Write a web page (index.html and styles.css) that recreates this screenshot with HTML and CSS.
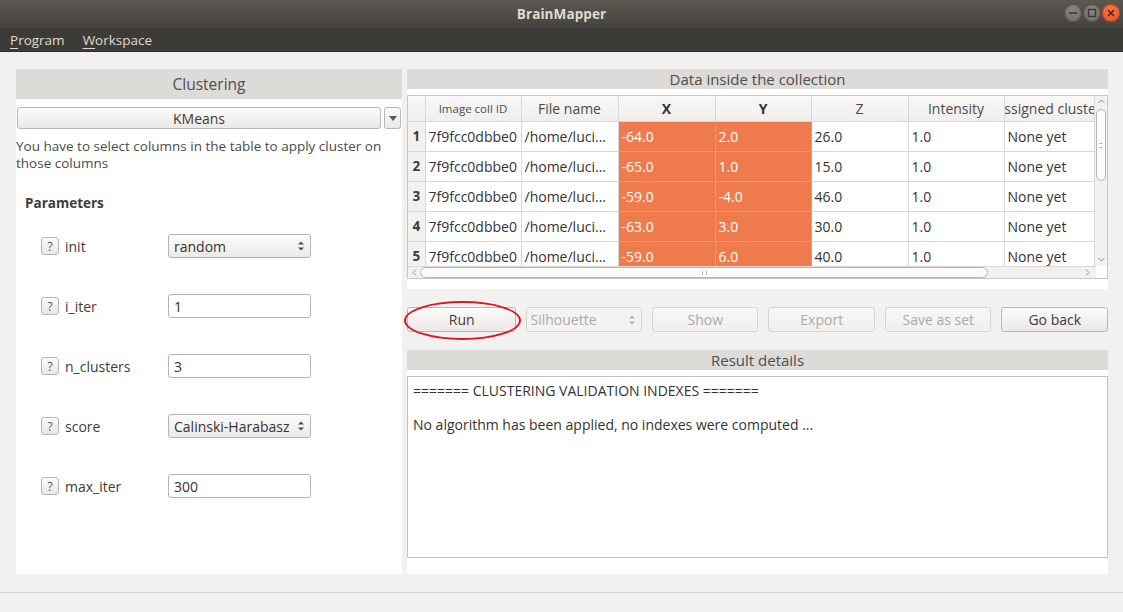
FILE: index.html
```html
<!DOCTYPE html>
<html>
<head>
<meta charset="utf-8">
<title>BrainMapper</title>
<link rel="stylesheet" href="styles.css">
</head>
<body>
<div class="window">
  <div class="titlebar">
    <span class="title">BrainMapper</span>
    <div class="wbtns">
      <span class="wbtn gray"><svg width="18" height="18" viewBox="0 0 18 18"><line x1="5" y1="9" x2="13" y2="9" stroke="#3b3a36" stroke-width="1.6"/></svg></span>
      <span class="wbtn gray"><svg width="18" height="18" viewBox="0 0 18 18"><rect x="5.5" y="5.5" width="7" height="7" fill="none" stroke="#3b3a36" stroke-width="1.4"/></svg></span>
      <span class="wbtn close"><svg width="18" height="18" viewBox="0 0 18 18"><path d="M6 6 L12 12 M12 6 L6 12" stroke="#4a2414" stroke-width="1.6"/></svg></span>
    </div>
  </div>
  <div class="menubar">
    <span class="menu"><u>P</u>rogram</span>
    <span class="menu"><u>W</u>orkspace</span>
  </div>

  <div class="main">
    <section class="left panel">
      <div class="phead big">Clustering</div>
      <div class="algo-row">
        <div class="btn algo">KMeans</div>
        <div class="btn algo-arrow"><svg width="8" height="5" viewBox="0 0 8 5"><path d="M0 0 L8 0 L4 5 Z" fill="#5a5a5a"/></svg></div>
      </div>
      <p class="desc">You have to select columns in the table to apply cluster on those columns</p>
      <div class="params-title">Parameters</div>
      <div class="params">
        <div class="prow">
          <span class="help">?</span><span class="plabel">init</span>
          <div class="combo field"><span>random</span><span class="spin"><svg width="6" height="10" viewBox="0 0 6 10"><path d="M0 3.5 L3 0.5 L6 3.5 Z M0 6.5 L3 9.5 L6 6.5 Z" fill="#4a4a4a"/></svg></span></div>
        </div>
        <div class="prow">
          <span class="help">?</span><span class="plabel">i_iter</span>
          <div class="input field">1</div>
        </div>
        <div class="prow">
          <span class="help">?</span><span class="plabel">n_clusters</span>
          <div class="input field">3</div>
        </div>
        <div class="prow">
          <span class="help">?</span><span class="plabel">score</span>
          <div class="combo field"><span>Calinski-Harabasz</span><span class="spin"><svg width="6" height="10" viewBox="0 0 6 10"><path d="M0 3.5 L3 0.5 L6 3.5 Z M0 6.5 L3 9.5 L6 6.5 Z" fill="#4a4a4a"/></svg></span></div>
        </div>
        <div class="prow">
          <span class="help">?</span><span class="plabel">max_iter</span>
          <div class="input field">300</div>
        </div>
      </div>
    </section>

    <section class="right">
      <div class="panel data-panel">
        <div class="phead">Data inside the collection</div>
        <div class="tableframe">
          <div class="tablewrap">
            <div class="tableview">
              <table class="grid">
                <colgroup>
                  <col style="width:17px"><col style="width:96px"><col style="width:97px"><col style="width:97px"><col style="width:96px"><col style="width:97px"><col style="width:96px"><col style="width:92px">
                </colgroup>
                <thead>
                  <tr>
                    <th class="corner"></th>
                    <th class="small">Image coll ID</th>
                    <th>File name</th>
                    <th class="sel">X</th>
                    <th class="sel">Y</th>
                    <th>Z</th>
                    <th>Intensity</th>
                    <th class="clip"><span>Assigned cluster</span></th>
                  </tr>
                </thead>
                <tbody>
                  <tr><th>1</th><td>7f9fcc0dbbe0</td><td>/home/luci...</td><td class="o">-64.0</td><td class="o">2.0</td><td>26.0</td><td>1.0</td><td>None yet</td></tr>
                  <tr><th>2</th><td>7f9fcc0dbbe0</td><td>/home/luci...</td><td class="o">-65.0</td><td class="o">1.0</td><td>15.0</td><td>1.0</td><td>None yet</td></tr>
                  <tr><th>3</th><td>7f9fcc0dbbe0</td><td>/home/luci...</td><td class="o">-59.0</td><td class="o">-4.0</td><td>46.0</td><td>1.0</td><td>None yet</td></tr>
                  <tr><th>4</th><td>7f9fcc0dbbe0</td><td>/home/luci...</td><td class="o">-63.0</td><td class="o">3.0</td><td>30.0</td><td>1.0</td><td>None yet</td></tr>
                  <tr><th>5</th><td>7f9fcc0dbbe0</td><td>/home/luci...</td><td class="o">-59.0</td><td class="o">6.0</td><td>40.0</td><td>1.0</td><td>None yet</td></tr>
                </tbody>
              </table>
            </div>
            <div class="vscroll">
              <svg class="arr" width="7" height="5" viewBox="0 0 7 5"><path d="M0.5 4 L3.5 1 L6.5 4" fill="none" stroke="#8a8a8a"/></svg>
              <div class="vthumb"><span class="grip-v"></span></div>
              <svg class="arr" width="7" height="5" viewBox="0 0 7 5"><path d="M0.5 1 L3.5 4 L6.5 1" fill="none" stroke="#8a8a8a"/></svg>
            </div>
          </div>
          <div class="hscroll">
            <svg class="arr" width="5" height="7" viewBox="0 0 5 7"><path d="M4 0.5 L1 3.5 L4 6.5" fill="none" stroke="#8a8a8a"/></svg>
            <div class="htrack"><div class="hthumb"><span class="grip-h"></span></div></div>
            <svg class="arr" width="5" height="7" viewBox="0 0 5 7"><path d="M1 0.5 L4 3.5 L1 6.5" fill="none" stroke="#8a8a8a"/></svg>
          </div>
        </div>
      </div>

      <div class="actions">
        <div class="btn act run">Run</div>
        <div class="btn act combo-dis"><span>Silhouette</span><span class="spin"><svg width="6" height="10" viewBox="0 0 6 10"><path d="M0 3.5 L3 0.5 L6 3.5 Z M0 6.5 L3 9.5 L6 6.5 Z" fill="#b0aeab"/></svg></span></div>
        <div class="btn act dis">Show</div>
        <div class="btn act dis">Export</div>
        <div class="btn act dis">Save as set</div>
        <div class="btn act">Go back</div>
        <div class="ring"></div>
      </div>

      <div class="panel result-panel">
        <div class="phead">Result details</div>
        <div class="textarea">
          <p>======= CLUSTERING VALIDATION INDEXES =======</p>
          <p class="gap">No algorithm has been applied, no indexes were computed ...</p>
        </div>
      </div>
    </section>
  </div>

  <div class="statusbar"></div>
</div>
</body>
</html>
```

FILE: styles.css
```css
* { box-sizing: border-box; }
html, body { margin: 0; padding: 0; }
body {
  width: 1123px;
  height: 612px;
  overflow: hidden;
  background: #f2f1f0;
  font-family: "Open Sans", "Noto Sans", "DejaVu Sans", sans-serif;
  font-size: 13px;
  color: #3c3c3c;
}
.window { display: flex; flex-direction: column; height: 612px; }

.titlebar {
  height: 28px;
  background: linear-gradient(#5b5852, #45433f);
  display: flex;
  align-items: center;
  justify-content: center;
  position: relative;
}
.title { color: #dfdbd2; font-weight: bold; font-size: 13.5px; letter-spacing: 0.1px; }
.wbtns { position: absolute; right: 3px; top: 4px; display: flex; gap: 1px; }
.wbtn {
  width: 18px; height: 18px; border-radius: 50%;
  display: flex; align-items: center; justify-content: center;
}
.wbtn.gray { background: radial-gradient(circle at 50% 35%, #8a8781, #6a6863); box-shadow: inset 0 0 0 1px #4e4c48; }
.wbtn.close { background: radial-gradient(circle at 50% 35%, #f7784a, #e2501f); box-shadow: inset 0 0 0 1px #b8451f; }

.menubar {
  height: 24px;
  background: #3c3b37;
  display: flex;
  align-items: center;
  padding-left: 10px;
  gap: 18px;
  border-bottom: 1px solid #2f2e2b;
}
.menu { color: #dfdbd2; font-size: 13.5px; }
.menu u { text-decoration-thickness: 1px; text-underline-offset: 3px; }

.main {
  display: flex;
  gap: 5px;
  padding: 17px 15px 0 16px;
  height: 523px;
}
.panel { background: #fff; }
.phead {
  background: #dcdbd8;
  color: #4d4d4d;
  text-align: center;
  font-size: 15px;
  height: 20px;
  line-height: 20px;
}
.phead.big { height: 30px; line-height: 30px; font-size: 15.5px; }

.left { width: 386px; height: 505px; }
.algo-row { display: flex; gap: 3px; padding: 8px 1px 0 1px; }
.btn {
  background: linear-gradient(#fbfbfa, #ebe9e7);
  border: 1px solid #bab7b2;
  border-radius: 3px;
  color: #3c3c3c;
  display: flex; align-items: center; justify-content: center;
}
.algo { flex: 1; height: 22px; font-size: 14px; }
.algo-arrow { width: 17px; height: 22px; }
.desc { margin: 9px 0 0 0; font-size: 13.5px; line-height: 17px; color: #4a4a4a; padding-right: 8px; }
.params-title { font-weight: bold; font-size: 13.5px; margin: 22px 0 0 9px; color: #3c3c3c; }
.params { display: flex; flex-direction: column; gap: 36px; margin-top: 22px; padding-left: 25px; }
.prow { display: flex; align-items: center; height: 24px; }
.help {
  width: 18px; height: 18px;
  border: 1px solid #bab7b2; border-radius: 3px;
  background: linear-gradient(#fbfbfa, #e9e7e5);
  font-size: 12px; color: #555;
  display: flex; align-items: center; justify-content: center;
}
.plabel { width: 109px; padding-left: 6px; font-size: 14px; color: #3c3c3c; }
.field {
  width: 143px; height: 24px;
  border: 1px solid #b6b3ae; border-radius: 3px;
  font-size: 14px; color: #333;
  display: flex; align-items: center; padding-left: 5px;
}
.input { background: #fff; }
.combo { background: linear-gradient(#fbfbfa, #eceae8); justify-content: space-between; padding-right: 6px; }
.spin { display: flex; align-items: center; }

.right { width: 701px; display: flex; flex-direction: column; }
.data-panel { height: 220px; }
.tableframe { margin-top: 6px; border: 1px solid #c9c7c3; height: 184px; display: flex; flex-direction: column; }
.tablewrap { display: flex; height: 170px; }
.tableview { flex: 1; overflow: hidden; }
.grid { border-collapse: collapse; table-layout: fixed; width: 688px; font-size: 14px; }
.grid th, .grid td { border: 1px solid #d9d8d6; padding: 0; white-space: nowrap; overflow: hidden; }
.grid thead th {
  height: 25px;
  background: linear-gradient(#f8f8f7, #efeeec);
  font-weight: normal; color: #4c4c4c; font-size: 14px;
  border-top: none;
}
.grid thead th.small { font-size: 11.5px; }
.grid thead th.sel { font-weight: bold; color: #333; }
.grid thead th.corner { border-left: none; }
.grid thead th.clip { text-align: left; }
.grid thead th.clip span { display: inline-block; margin-left: -9px; }
.grid tbody th {
  background: #f2f1f0; font-weight: bold; color: #3c3c3c; text-align: center; font-size: 13.5px;
  border-left: none;
}
.grid tbody td { height: 30px; padding-left: 3px; color: #333; background: #fff; }
.grid tbody td.o { background: #ef7a4b; color: #fff; border-color: #d5a089; }

.vscroll {
  width: 13px; background: #f2f1f0; border-left: 1px solid #dad8d5;
  display: flex; flex-direction: column; align-items: center; padding: 3px 0 4px;
}
.vthumb {
  width: 10px; height: 72px; margin: 5px 0 auto; border: 1px solid #b6b4b0; border-radius: 5px; background: #fbfbfa;
  display: flex; align-items: center; justify-content: center;
}
.grip-v { width: 4px; height: 5px; border-top: 1px solid #bbb; border-bottom: 1px solid #bbb; }
.hscroll {
  height: 13px; background: #f2f1f0; border-top: 1px solid #dad8d5;
  display: flex; align-items: center; padding: 0 6px 0 4px; gap: 3px; width: 688px;
}
.htrack { flex: 1; height: 11px; display: flex; }
.hthumb {
  width: 568px; height: 11px; border: 1px solid #b6b4b0; border-radius: 6px; background: #fbfbfa;
  display: flex; align-items: center; justify-content: center;
}
.grip-h { width: 5px; height: 4px; border-left: 1px solid #bbb; border-right: 1px solid #bbb; }

.actions { display: flex; gap: 10px; margin-top: 18px; height: 25px; position: relative; }
.act { width: 107px; height: 25px; font-size: 14px; }
.run { width: 110px; }
.combo-dis { width: 116px; justify-content: space-between; padding: 0 6px 0 3px; color: #acaaa7; border-color: #d6d4d0; background: #f4f3f2; }
.dis { color: #acaaa7; border-color: #d6d4d0; background: linear-gradient(#f7f7f6, #f0efee); }
.ring {
  position: absolute; left: -3px; top: -6px; width: 117px; height: 39px;
  border: 2.5px solid #e0161e; border-radius: 50%;
}

.result-panel { margin-top: 18px; height: 224px; display: flex; flex-direction: column; }
.textarea {
  margin-top: 6px; height: 182px; border: 1px solid #c4c2be; background: #fff;
  padding: 5px 5px; font-size: 14px; color: #333;
}
.textarea p { margin: 0; line-height: 17px; }
.textarea p.gap { margin-top: 17px; }

.statusbar { margin-top: 17px; flex: 1; border-top: 1px solid #d6d4d1; background: #f2f1f0; }
```
